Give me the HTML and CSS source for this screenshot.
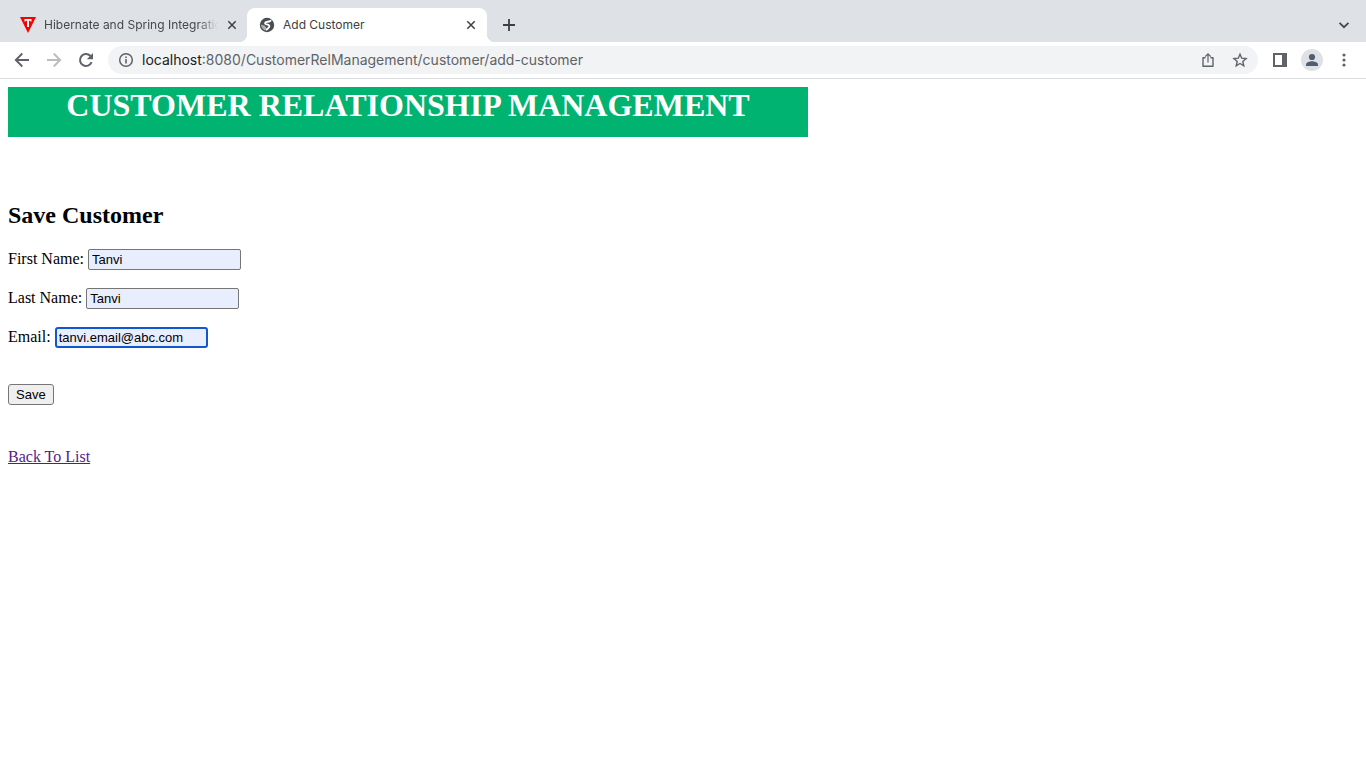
FILE: index.html
```html
<!DOCTYPE html>
<html lang="en">
<head>
<meta charset="utf-8">
<title>Add Customer</title>
<link rel="stylesheet" href="styles.css">
</head>
<body>
<header class="browser">
  <nav class="tabs" aria-label="Tabs">
    <div class="tab">
      <svg class="icon" width="16" height="16" viewBox="0 0 16 16"><path d="M0 0h16L8 16z" fill="#f60000"/><path d="M4.500 2h7v2.400h-1L10.200 3.800H9V10H7V3.800H5.800l-.3.600h-1z" fill="#fff"/></svg>
      <span class="tab-title faded">Hibernate and Spring Integration</span>
      <button class="close" aria-label="Close tab"><svg width="10" height="10" viewBox="0 0 10 10"><path d="M1.300 1.300l7.400 7.400M8.700 1.300L1.300 8.700" stroke="#3c4043" stroke-width="1.500"/></svg></button>
    </div>
    <div class="tab active">
      <svg class="icon" width="16" height="16" viewBox="0 0 16 16"><circle cx="8" cy="8" r="7.200" fill="#4a4d51"/><path d="M11.600 3.600C10.300 5.300 6.200 4.200 6 6.200c-.1 1.600 3.800.7 4.400 2.600.5 1.600-1.400 2.400-2.700 3.800" fill="none" stroke="#fff" stroke-width="1.800" stroke-linecap="round"/><path d="M2.200 7.600l3.600 1.200 1.700 2.200-.2 2.600C4.200 13.400 1.900 10.700 2.200 7.600z" fill="#fff" fill-opacity=".55"/></svg>
      <span class="tab-title">Add Customer</span>
      <button class="close" aria-label="Close tab"><svg width="10" height="10" viewBox="0 0 10 10"><path d="M1.300 1.300l7.400 7.400M8.700 1.300L1.300 8.700" stroke="#3c4043" stroke-width="1.500"/></svg></button>
    </div>
    <button class="tool new-tab" aria-label="New tab"><svg width="14" height="14" viewBox="0 0 14 14"><path d="M7 1v12M1 7h12" stroke="#3c4043" stroke-width="1.800"/></svg></button>
    <button class="tool tab-search" aria-label="Search tabs"><svg width="12" height="12" viewBox="0 0 12 12"><path d="M1.500 3.800L6 8.200l4.500-4.400" fill="none" stroke="#45484c" stroke-width="1.800"/></svg></button>
  </nav>
  <div class="toolbar">
    <button class="tool" aria-label="Back"><svg width="16" height="16" viewBox="0 0 16 16"><path d="M15 8H2.500M8.300 1.500L1.800 8l6.500 6.500" fill="none" stroke="#5f6368" stroke-width="1.900"/></svg></button>
    <button class="tool" aria-label="Forward" disabled><svg width="16" height="16" viewBox="0 0 16 16"><path d="M1 8h12.500M7.700 1.500L14.200 8l-6.500 6.500" fill="none" stroke="#babcbe" stroke-width="1.900"/></svg></button>
    <button class="tool" aria-label="Reload"><svg width="16" height="16" viewBox="0 0 16 16"><path d="M13.600 10.200A6 6 0 1 1 12.300 3.800L13.500 5" fill="none" stroke="#5f6368" stroke-width="2"/><path d="M15 1v6.200H8.800z" fill="#5f6368"/></svg></button>
    <div class="address">
      <svg class="icon" width="16" height="16" viewBox="0 0 16 16"><circle cx="8" cy="8" r="6.300" fill="none" stroke="#5f6368" stroke-width="1.500"/><path d="M8 7v4.500M8 4.400v1.600" stroke="#5f6368" stroke-width="1.600"/></svg>
      <label class="host" for="url">localhost</label><input class="url" id="url" type="text" value=":8080/CustomerRelManagement/customer/add-customer">
      <button class="tool" aria-label="Share"><svg width="16" height="16" viewBox="0 0 16 16"><path d="M5.500 5.700H3v8.600h10V5.700h-2.500" fill="none" stroke="#5f6368" stroke-width="1.400" stroke-linejoin="round"/><path d="M8 10.500V2M5.200 4.600L8 1.800l2.800 2.800" fill="none" stroke="#5f6368" stroke-width="1.200"/></svg></button>
      <button class="tool" aria-label="Bookmark"><svg width="16" height="16" viewBox="0 0 16 16"><path d="M8 2.200l1.700 4 4.400.4-3.300 2.900 1 4.300L8 11.500l-3.800 2.300 1-4.300L1.900 6.600l4.400-.4z" fill="none" stroke="#5f6368" stroke-width="1.400"/></svg></button>
    </div>
    <button class="tool" aria-label="Side panel"><svg width="16" height="16" viewBox="0 0 16 16"><path fill-rule="evenodd" d="M1 1h14v14H1zM3 3v10h7V3z" fill="#5f6368"/></svg></button>
    <button class="tool profile" aria-label="Profile"><svg width="22" height="22" viewBox="0 0 22 22"><circle cx="11" cy="11" r="11" fill="#dee1e6"/><circle cx="11" cy="8" r="3.100" fill="#525d74"/><path d="M5 17v-1.500c0-2.200 4-3.300 6-3.300s6 1.100 6 3.300V17z" fill="#525d74"/></svg></button>
    <button class="tool" aria-label="Menu"><svg width="16" height="16" viewBox="0 0 16 16" fill="#5f6368"><circle cx="8" cy="3" r="1.600"/><circle cx="8" cy="8" r="1.600"/><circle cx="8" cy="13" r="1.600"/></svg></button>
  </div>
</header>
<main class="page">
  <div class="banner"><h1>CUSTOMER RELATIONSHIP MANAGEMENT</h1></div>
  <h2>Save Customer</h2>
  <form class="form">
    <div class="row"><label for="first">First Name:</label><input class="field" id="first" type="text" value="Tanvi"></div>
    <div class="row"><label for="last">Last Name:</label><input class="field" id="last" type="text" value="Tanvi"></div>
    <div class="row"><label for="email">Email:</label><input class="field current" id="email" type="text" value="tanvi.email@abc.com"></div>
    <button class="save" type="button">Save</button>
  </form>
  <a class="back" href="#list">Back To List</a>
</main>
</body>
</html>
```
FILE: styles.css
```css
* { box-sizing: border-box; }
body { margin: 0; background: #fff; color: #000; font: 16px "Liberation Serif", serif; }
button { margin: 0; font: inherit; }

.browser { font-family: Inter, sans-serif; border-bottom: 1px solid #dadce0; }
.tabs { display: flex; align-items: center; height: 42px; padding: 8px 12px 0 8px; background: #dee1e6; }
.tab { display: flex; align-items: center; gap: 8px; height: 34px; width: 240px; padding: 0 10px 0 12px; font-size: 12px; color: #45484c; position: relative; }
.tab + .tab { margin-left: -1px; }
.tab.active { background: #fff; border-radius: 8px 8px 0 0; color: #3c4043; }
.tab.active::before, .tab.active::after { content: ""; position: absolute; bottom: 0; width: 8px; height: 8px; }
.tab.active::before { right: 100%; background: radial-gradient(circle at 0 0, transparent 8px, #fff 8px); }
.tab.active::after { left: 100%; background: radial-gradient(circle at 100% 0, transparent 8px, #fff 8px); }
.tab-title { flex: 1; min-width: 0; padding-bottom: 2px; overflow: hidden; white-space: nowrap; }
.faded { -webkit-mask-image: linear-gradient(to left, transparent, #000 20px); mask-image: linear-gradient(to left, transparent, #000 20px); }
.icon { flex: none; }
.close, .tool { display: flex; align-items: center; justify-content: center; flex: none; padding: 0; border: 0; background: none; }
.close { width: 12px; height: 16px; }
.tool { width: 16px; height: 16px; }
.new-tab { margin-left: 14px; }
.tab-search { margin-left: auto; width: 20px; }

.toolbar { display: flex; align-items: center; gap: 16px; height: 36px; padding: 0 14px; }
.toolbar .profile { width: 22px; margin: 0 -3px; }
.address { flex: 1; display: flex; align-items: center; height: 28px; padding: 0 10px; margin: 0 -2px; border-radius: 14px; background: #f1f3f4; font-size: 14px; }
.host, .url { padding: 0 0 2px; }
.host { margin-left: 8px; color: #202124; }
.url { flex: 1; min-width: 0; border: 0; outline: 0; background: none; font: inherit; color: #5f6368; }
.address .tool { margin-left: 16px; }

.page { padding: 8px; }
.banner { max-width: 800px; height: 50px; background: #00b371; color: #fff; text-align: center; }
h1 { margin: 0; font-size: 32px; line-height: 37px; }
h2 { margin: 64px 0 20px; font-size: 24px; line-height: 28px; }
.form { display: flex; flex-direction: column; align-items: flex-start; gap: 18px; }
.row { display: flex; align-items: flex-start; gap: 4px; }
.row label { line-height: 19px; }
.field { width: 153px; height: 21px; padding: 1px 3px; border: 1px solid #767676; border-radius: 2px; outline: 0; background: #e8eefe; color: #000; font: 13px "Liberation Sans", Arial, sans-serif; }
.field.current { border: 2px solid #1058cf; border-radius: 3px; padding: 0 2px; }
.save { height: 21px; margin-top: 18px; padding: 0 7px; border: 1px solid #767676; border-radius: 3px; background: #efefef; color: #000; font: 13px "Liberation Sans", Arial, sans-serif; }
.back { display: inline-block; margin-top: 43px; line-height: 18px; color: #551a8b; }
```
